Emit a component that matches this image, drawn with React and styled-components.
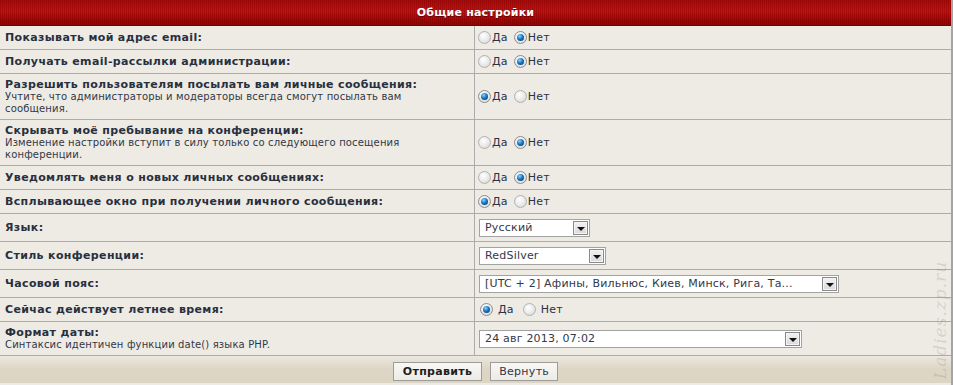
import React from "react";
import styled, { createGlobalStyle } from "styled-components";

const GlobalStyle = createGlobalStyle`
  html, body {
    margin: 0;
    padding: 0;
    background: #eeebe4;
  }
  body {
    font-family: "DejaVu Sans", Verdana, sans-serif;
    font-size: 11px;
  }
`;

const Panel = styled.div`
  position: relative;
  width: 953px;
  height: 385px;
  box-sizing: border-box;
  border-right: 2px solid #a4a4a4;
  background: #eeebe4;
  overflow: hidden;
`;

const Header = styled.div`
  height: 26px;
  display: flex;
  align-items: center;
  justify-content: center;
  box-sizing: border-box;
  border-bottom: 1px solid #7a0000;
  background:
    repeating-linear-gradient(90deg, rgba(0, 0, 0, 0.06) 0 1px, rgba(255, 255, 255, 0.03) 1px 2px),
    linear-gradient(#a00606, #b90d0d 45%, #9a0202 80%, #8c0000);
  color: #fff;
  font-weight: bold;
  font-size: 11px;
  letter-spacing: 0.2px;
  text-shadow: 0 1px 0 rgba(60, 0, 0, 0.6);
`;

const Row = styled.div`
  display: grid;
  grid-template-columns: 475px 1fr;
  height: ${(p) => p.h}px;
  border-bottom: 1px solid #acacac;
  box-sizing: border-box;
`;

const LabelCell = styled.div`
  display: flex;
  flex-direction: column;
  justify-content: center;
  padding-left: 5px;
  border-right: 1px solid #acacac;
`;

const Label = styled.div`
  font-weight: bold;
  font-size: 11px;
  line-height: 13px;
  letter-spacing: 0.35px;
  color: #283040;
`;

const Hint = styled.div`
  font-size: 10px;
  line-height: 12px;
  letter-spacing: 0.15px;
  color: #313846;
  width: 425px;
`;

const ValueCell = styled.div`
  display: flex;
  align-items: center;
  padding-left: ${(p) => p.pad ?? 3}px;
`;

const Option = styled.label`
  display: flex;
  align-items: center;
  margin-right: ${(p) => (p.spaced ? 9 : 6)}px;
  color: #2b3246;
  font-size: 11px;
  letter-spacing: 0.2px;
`;

const Radio = styled.span`
  display: inline-block;
  position: relative;
  width: 13px;
  height: 13px;
  box-sizing: border-box;
  border-radius: 50%;
  border: 1px solid ${(p) => (p.checked ? "#8d8d8d" : "#b2b2b2")};
  background: radial-gradient(circle at 40% 35%, #ffffff, #e8e8e8 55%, #cfcfcf);
  margin-right: ${(p) => (p.spaced ? 5 : 1)}px;

  &::after {
    content: "";
    display: ${(p) => (p.checked ? "block" : "none")};
    position: absolute;
    left: 2px;
    top: 2px;
    width: 7px;
    height: 7px;
    border-radius: 50%;
    background: radial-gradient(circle at 38% 32%, #8fd3ff, #1a78c2 45%, #053a6b 90%);
  }
`;

const Select = styled.div`
  display: flex;
  align-items: center;
  justify-content: space-between;
  width: ${(p) => p.w}px;
  height: 18px;
  box-sizing: border-box;
  border: 1px solid #a2a2a2;
  background: #fff;
  padding-left: 5px;
  padding-right: 1px;
  color: #323949;
  font-size: 11px;
  letter-spacing: 0.2px;
  white-space: nowrap;
`;

const Arrow = styled.span`
  display: flex;
  align-items: center;
  justify-content: center;
  flex-shrink: 0;
  width: 15px;
  height: 14px;
  box-sizing: border-box;
  border: 1px solid #8a8a8a;
  box-shadow: inset 0 0 0 1px #f4f4f4;
  background: linear-gradient(#f2f2f2, #d9d9d9);

  &::after {
    content: "";
    margin-top: 2px;
    border-left: 4px solid transparent;
    border-right: 4px solid transparent;
    border-top: 4px solid #111;
  }
`;

const Footer = styled.div`
  display: flex;
  justify-content: center;
  gap: 8px;
  height: 29px;
  padding-top: 6px;
  box-sizing: border-box;
  background: linear-gradient(#ece8df, #ddd6c6 45%, #dcd5c4 92%, #eeebe4 93%);
`;

const Button = styled.button`
  height: 19px;
  padding: 0 ${(p) => (p.primary ? 9 : 8)}px;
  border: 1px solid #9c9c9c;
  background: linear-gradient(#f8f7f4, #ecebe6);
  font-family: "DejaVu Sans", Verdana, sans-serif;
  font-size: 11px;
  font-weight: ${(p) => (p.primary ? "bold" : "normal")};
  letter-spacing: 0.3px;
  color: ${(p) => (p.primary ? "#1e1e1e" : "#2e3548")};
  line-height: 17px;
`;

const Watermark = styled.div`
  position: absolute;
  right: -48px;
  bottom: 55px;
  transform: rotate(-90deg);
  font-family: "DejaVu Serif", serif;
  font-style: italic;
  font-size: 17px;
  letter-spacing: 1px;
  color: rgba(140, 135, 125, 0.26);
  white-space: nowrap;
`;

const YesNo = ({ yes, spaced }) => (
  <ValueCell pad={spaced ? 5 : 3}>
    <Option spaced={spaced}>
      <Radio checked={yes} spaced={spaced} />
      Да
    </Option>
    <Option spaced={spaced}>
      <Radio checked={!yes} spaced={spaced} />
      Нет
    </Option>
  </ValueCell>
);

const rows = [
  { label: "Показывать мой адрес email:", yes: false },
  { label: "Получать email-рассылки администрации:", yes: false },
  {
    label: "Разрешить пользователям посылать вам личные сообщения:",
    hint: "Учтите, что администраторы и модераторы всегда смогут посылать вам сообщения.",
    yes: true,
    h: 46,
  },
  {
    label: "Скрывать моё пребывание на конференции:",
    hint: "Изменение настройки вступит в силу только со следующего посещения конференции.",
    yes: false,
    h: 46,
  },
  { label: "Уведомлять меня о новых личных сообщениях:", yes: false },
  { label: "Всплывающее окно при получении личного сообщения:", yes: true },
];

const selects = [
  { label: "Язык:", value: "Русский", w: 111 },
  { label: "Стиль конференции:", value: "RedSilver", w: 127 },
  { label: "Часовой пояс:", value: "[UTC + 2] Афины, Вильнюс, Киев, Минск, Рига, Та...", w: 360 },
];

export default function App() {
  return (
    <>
      <GlobalStyle />
      <Panel>
        <Header>Общие настройки</Header>
        {rows.map((r) => (
          <Row key={r.label} h={r.h || 24}>
            <LabelCell>
              <Label>{r.label}</Label>
              {r.hint && <Hint>{r.hint}</Hint>}
            </LabelCell>
            <YesNo yes={r.yes} />
          </Row>
        ))}
        {selects.map((s) => (
          <Row key={s.label} h={28}>
            <LabelCell>
              <Label>{s.label}</Label>
            </LabelCell>
            <ValueCell pad={4}>
              <Select w={s.w}>
                {s.value}
                <Arrow />
              </Select>
            </ValueCell>
          </Row>
        ))}
        <Row h={24}>
          <LabelCell>
            <Label>Сейчас действует летнее время:</Label>
          </LabelCell>
          <YesNo yes spaced />
        </Row>
        <Row h={34}>
          <LabelCell>
            <Label>Формат даты:</Label>
            <Hint>Синтаксис идентичен функции date() языка PHP.</Hint>
          </LabelCell>
          <ValueCell pad={4}>
            <Select w={323}>
              24 авг 2013, 07:02
              <Arrow />
            </Select>
          </ValueCell>
        </Row>
        <Footer>
          <Button primary>Отправить</Button>
          <Button>Вернуть</Button>
        </Footer>
        <Watermark>Ladies.zp.ru</Watermark>
      </Panel>
    </>
  );
}
